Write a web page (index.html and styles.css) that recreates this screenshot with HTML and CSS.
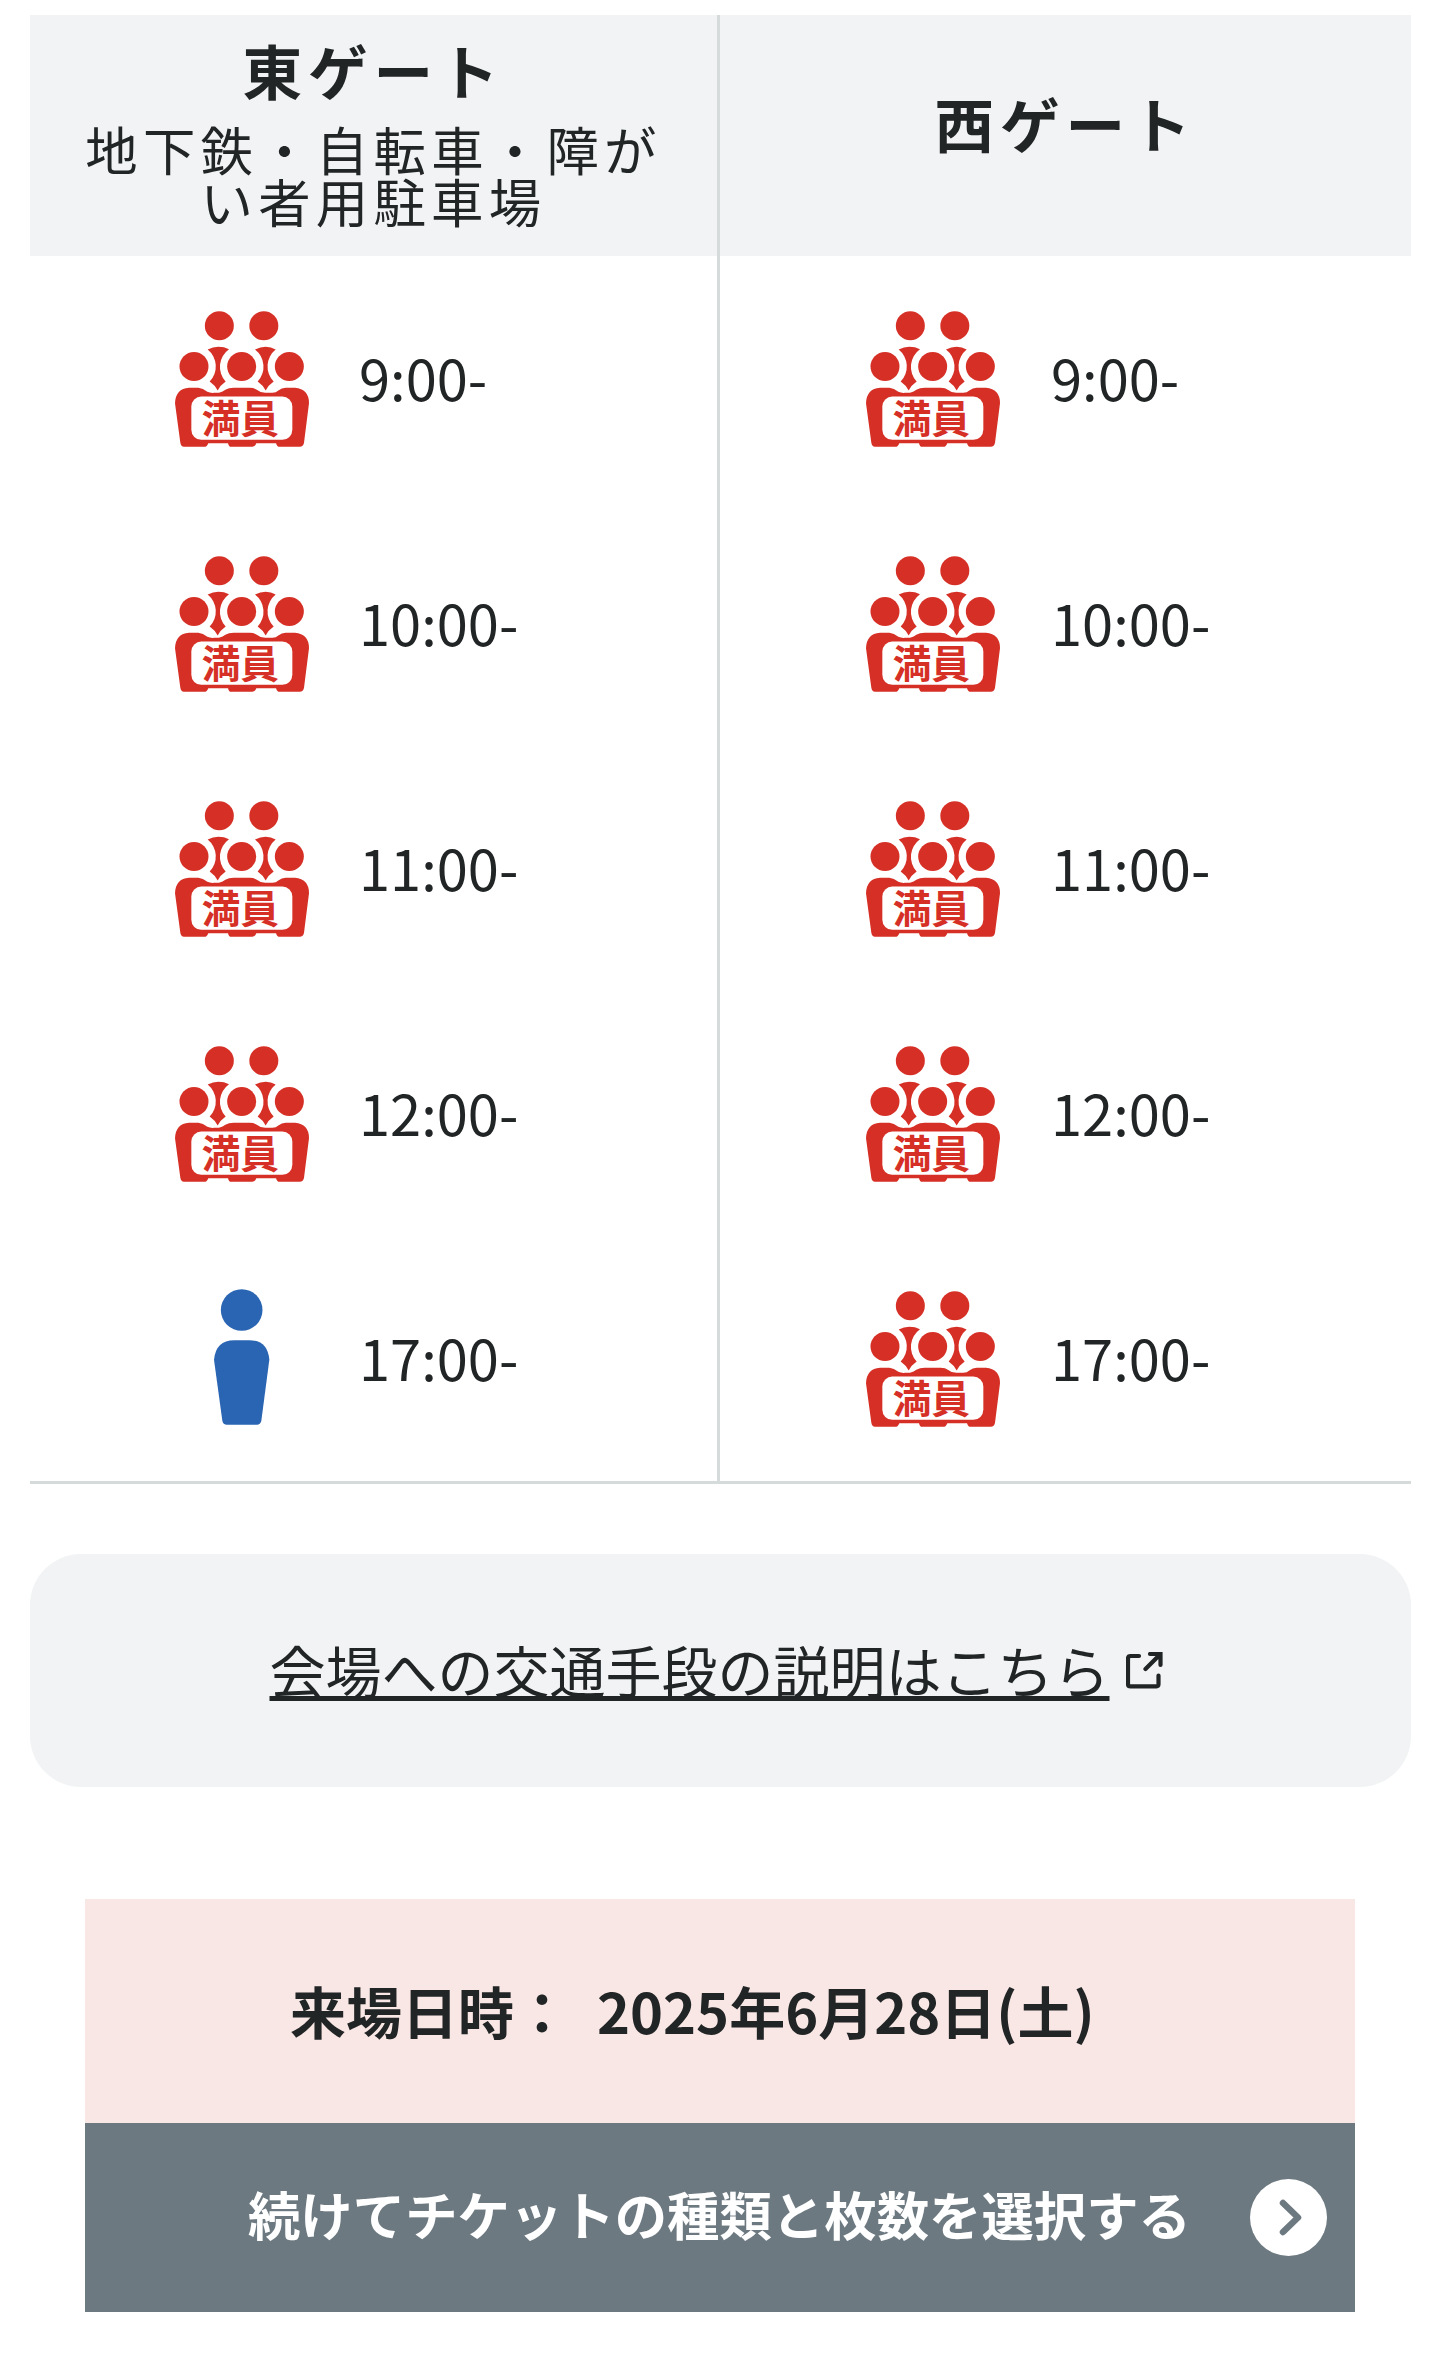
FILE: index.html
```html
<!doctype html>
<html lang="ja">

    <head>
        <title>来場日時</title>
        <meta charset="UTF-8">
        <meta name="viewport" content="width=device-width, initial-scale=1">
        <link rel="stylesheet" href="styles.css">
    </head>

    <body>
        <!-- Shared icons -->
        <svg class="defs">
            <symbol id="full" viewBox="46 34 402 407">
                <circle cx="179" cy="78" r="43.5"/>
                <circle cx="312.500" cy="78" r="43.5"/>
                <circle cx="103" cy="200" r="43.5"/>
                <circle cx="246" cy="200" r="43.5"/>
                <circle cx="389" cy="200" r="43.5"/>
                <path d="M144 149Q160 141 176 141Q194 141 208 148A65 65 0 0 0 198 245Q182 256 174 272Q166 256 150 245A65 65 0 0 0 144 149Z"/>
                <path d="M286 149Q302 141 318 141Q334 141 348 149A65 65 0 0 0 342 245Q326 256 318 272Q310 256 294 245A65 65 0 0 0 286 149Z"/>
                <path d="M88 264H116Q130 265 143 276Q152 280 163 279H178Q190 276 197 270Q207 264 222 264H270Q284 264 294 271Q304 280 320 279H338Q349 279 356 272Q366 264 378 264H406Q448 268 448 310L433 429Q431 441 420 441H360Q352 441 349 430H290Q286 441 278 441H215Q207 441 205 430H146Q142 441 134 441H73Q64 441 62 429L46 310Q48 267 88 264Z"/>
                <rect x="95" y="290" width="303" height="130" rx="30" fill="#fff"/>
                <text x="242" y="400" text-anchor="middle">満員</text>
            </symbol>
            <symbol id="free" viewBox="46 34 402 407">
                <circle cx="246" cy="96.500" r="62.5"/>
                <path d="M224 187H268Q324 187 329 246L305 429Q302 441 292 441H202Q190 441 188 429L163 246Q168 187 224 187Z"/>
            </symbol>
        </svg>

        <div class="gates">
            <div class="gate east">
                <div class="gate-head">
                    <h2>東ゲート</h2>
                    <p>地下鉄・自転車・障がい者用駐車場</p>
                </div>
                <ul>
                    <li><svg class="full"><use href="#full"/></svg><span>9:00-</span></li>
                    <li><svg class="full"><use href="#full"/></svg><span>10:00-</span></li>
                    <li><svg class="full"><use href="#full"/></svg><span>11:00-</span></li>
                    <li><svg class="full"><use href="#full"/></svg><span>12:00-</span></li>
                    <li><svg class="free"><use href="#free"/></svg><span>17:00-</span></li>
                </ul>
            </div>
            <div class="gate west">
                <div class="gate-head">
                    <h2>西ゲート</h2>
                </div>
                <ul>
                    <li><svg class="full"><use href="#full"/></svg><span>9:00-</span></li>
                    <li><svg class="full"><use href="#full"/></svg><span>10:00-</span></li>
                    <li><svg class="full"><use href="#full"/></svg><span>11:00-</span></li>
                    <li><svg class="full"><use href="#full"/></svg><span>12:00-</span></li>
                    <li><svg class="full"><use href="#full"/></svg><span>17:00-</span></li>
                </ul>
            </div>
        </div>

        <div class="access">
            <a href="#">会場への交通手段の説明はこちら</a>
            <svg class="external" viewBox="0 0 37 37">
                <path d="M13 4H4.500Q2 4 2 6.500V32Q2 34.300 4.500 34.300H30.500Q32.500 34.300 32.500 32V23.500"/>
                <path d="M19.500 17L33 3.500M24 2H34.500V13"/>
            </svg>
        </div>

        <div class="visit">
            <div class="visit-date">
                <span>来場日時：</span>
                <span>2025年6月28日(土)</span>
            </div>
            <a href="#" class="next">
                <span>続けてチケットの種類と枚数を選択する</span>
                <svg class="arrow" viewBox="0 0 77 77">
                    <circle cx="38.500" cy="38.500" r="38.5"/>
                    <path d="M33 24L48 38.500L33 53"/>
                </svg>
            </a>
        </div>
    </body>

</html>
```

FILE: styles.css
```css
* {
  box-sizing: border-box;
  margin: 0;
  padding: 0;
}

body {
  font-family: "Noto Sans CJK JP", sans-serif;
  color: #222526;
  background: #fff;
  padding: 15px 29px 0 30px;
}

.defs {
  display: none;
}

/* Two gate columns */
.gates {
  display: flex;
  border-bottom: 3px solid #d5dadb;
}

.gate {
  flex: 1;
}

.east {
  flex: 0 0 690px;
  border-right: 3px solid #d5dadb;
}

.gate-head {
  display: flex;
  flex-direction: column;
  justify-content: center;
  height: 241px;
  padding: 0 50px 4px;
  background: #f1f3f4;
  text-align: center;
}

.gate-head h2 {
  margin-bottom: 22px;
  font-size: 59.6px;
  line-height: 1;
  letter-spacing: 0.1em;
}

.gate-head p {
  font-size: 52.4px;
  line-height: 1;
  letter-spacing: 0.1em;
}

/* Entry times */
.gate ul {
  list-style: none;
}

.gate li {
  display: flex;
  align-items: center;
  gap: 50px;
  height: 245px;
  padding-left: 145px;
  font-size: 56px;
}

.west li {
  gap: 51px;
  padding-left: 146px;
}

.gate li svg {
  width: 134px;
  height: 136px;
}

.gate li span {
  padding-bottom: 4px;
}

.full {
  fill: #d63026;
  font-size: 116px;
  font-weight: bold;
}

.free {
  margin-bottom: 4px;
  fill: #2a65b3;
}

/* Link to the access guide */
.access {
  display: flex;
  align-items: center;
  justify-content: center;
  gap: 16px;
  height: 233px;
  margin-top: 70px;
  padding-right: 9px;
  border-radius: 51px;
  background: #f1f3f4;
  font-size: 56px;
}

.access a {
  padding-bottom: 4px;
  color: #222526;
  line-height: 1;
  text-decoration: underline;
  text-decoration-thickness: 5px;
  text-decoration-skip-ink: none;
  text-underline-offset: 3px;
}

.external {
  width: 37px;
  height: 37px;
  fill: none;
  stroke: #222526;
  stroke-width: 4.2;
  stroke-linecap: round;
}

/* Selected date and next button */
.visit {
  margin: 112px 56px 0 55px;
  font-weight: bold;
}

.visit-date {
  display: flex;
  gap: 27px;
  align-items: center;
  height: 224px;
  padding: 0 0 4px 205px;
  background: #f9e7e5;
  font-size: 56px;
}

.next {
  display: flex;
  align-items: center;
  justify-content: flex-end;
  gap: 59px;
  height: 189px;
  padding-right: 28px;
  background: #6d7980;
  color: #fff;
  font-size: 52.4px;
  text-decoration: none;
}

.next span {
  padding-bottom: 9px;
}

.arrow {
  width: 77px;
  height: 77px;
  fill: #fff;
}

.arrow path {
  fill: none;
  stroke: #6d7980;
  stroke-width: 6.5;
  stroke-linecap: round;
  stroke-linejoin: round;
}
```
